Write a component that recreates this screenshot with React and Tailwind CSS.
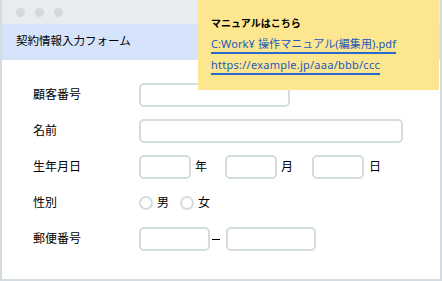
import React from "react";

const font = { fontFamily: '"Liberation Sans", "Noto Sans CJK JP", sans-serif' };
const linkFont = { fontFamily: '"Noto Sans", "Noto Sans CJK JP", sans-serif' };

function Field({ className = "" }) {
  return <div className={`h-6 rounded-[5px] border-2 border-[#d3dde0] bg-white ${className}`} />;
}

function Radio({ label }) {
  return (
    <label className="flex items-center gap-1">
      <span className="h-[14px] w-[14px] rounded-full border-2 border-[#d3dde0] bg-white" />
      <span>{label}</span>
    </label>
  );
}

function Row({ label, children }) {
  return (
    <div className="flex h-6 items-center">
      <div className="w-[106px] shrink-0">{label}</div>
      <div className="flex items-center">{children}</div>
    </div>
  );
}

export default function App() {
  return (
    <div
      className="relative h-[281px] w-[442px] overflow-hidden bg-white text-[12px] text-black"
      style={font}
    >
      <div className="flex h-full flex-col border-x-2 border-b-2 border-[#d3dce0]">
        {/* title bar */}
        <div className="flex h-6 items-center gap-[10px] bg-[#e8ecee] pl-[14px]">
          <span className="h-[9px] w-[9px] rounded-full bg-[#d3dade]" />
          <span className="h-[9px] w-[9px] rounded-full bg-[#d3dade]" />
          <span className="h-[9px] w-[9px] rounded-full bg-[#d3dade]" />
        </div>

        {/* form header */}
        <div className="flex h-9 items-center bg-[#d6e4fb] pl-[14px] text-[11.5px]">
          契約情報入力フォーム
        </div>

        {/* form body */}
        <div className="flex flex-col gap-3 pl-[31px] pt-[23px]">
          <Row label="顧客番号">
            <Field className="w-[151px]" />
          </Row>
          <Row label="名前">
            <Field className="w-[264px]" />
          </Row>
          <Row label="生年月日">
            <Field className="w-[52px]" />
            <span className="ml-1 mr-[18px]">年</span>
            <Field className="w-[52px]" />
            <span className="ml-1 mr-[19px]">月</span>
            <Field className="w-[52px]" />
            <span className="ml-[5px]">日</span>
          </Row>
          <Row label="性別">
            <div className="flex items-center gap-[11px]">
              <Radio label="男" />
              <Radio label="女" />
            </div>
          </Row>
          <Row label="郵便番号">
            <Field className="w-[71px]" />
            <span className="mx-[2px] h-px w-2 bg-black" />
            <Field className="ml-[4px] w-[90px]" />
          </Row>
        </div>
      </div>

      {/* manual popup */}
      <div className="absolute left-[198px] top-0 flex h-[90px] w-[241px] flex-col bg-[#fce68f] pl-[13px] pt-[17px] text-[10px]">
        <div className="font-bold leading-[14px]">マニュアルはこちら</div>
        <a
          className="mt-[6px] self-start border-b-2 border-[#2a6ad0] pb-[1px] text-[11px] leading-[14px] tracking-[0.1px] text-[#1b57c0]"
          style={linkFont}
        >
          C:Work¥ 操作マニュアル(編集用).pdf
        </a>
        <a
          className="mt-[4px] self-start border-b-2 border-[#2a6ad0] pb-[1px] text-[11px] leading-[14px] tracking-[0.25px] text-[#1b57c0]"
          style={linkFont}
        >
          https://example.jp/aaa/bbb/ccc
        </a>
      </div>
    </div>
  );
}
